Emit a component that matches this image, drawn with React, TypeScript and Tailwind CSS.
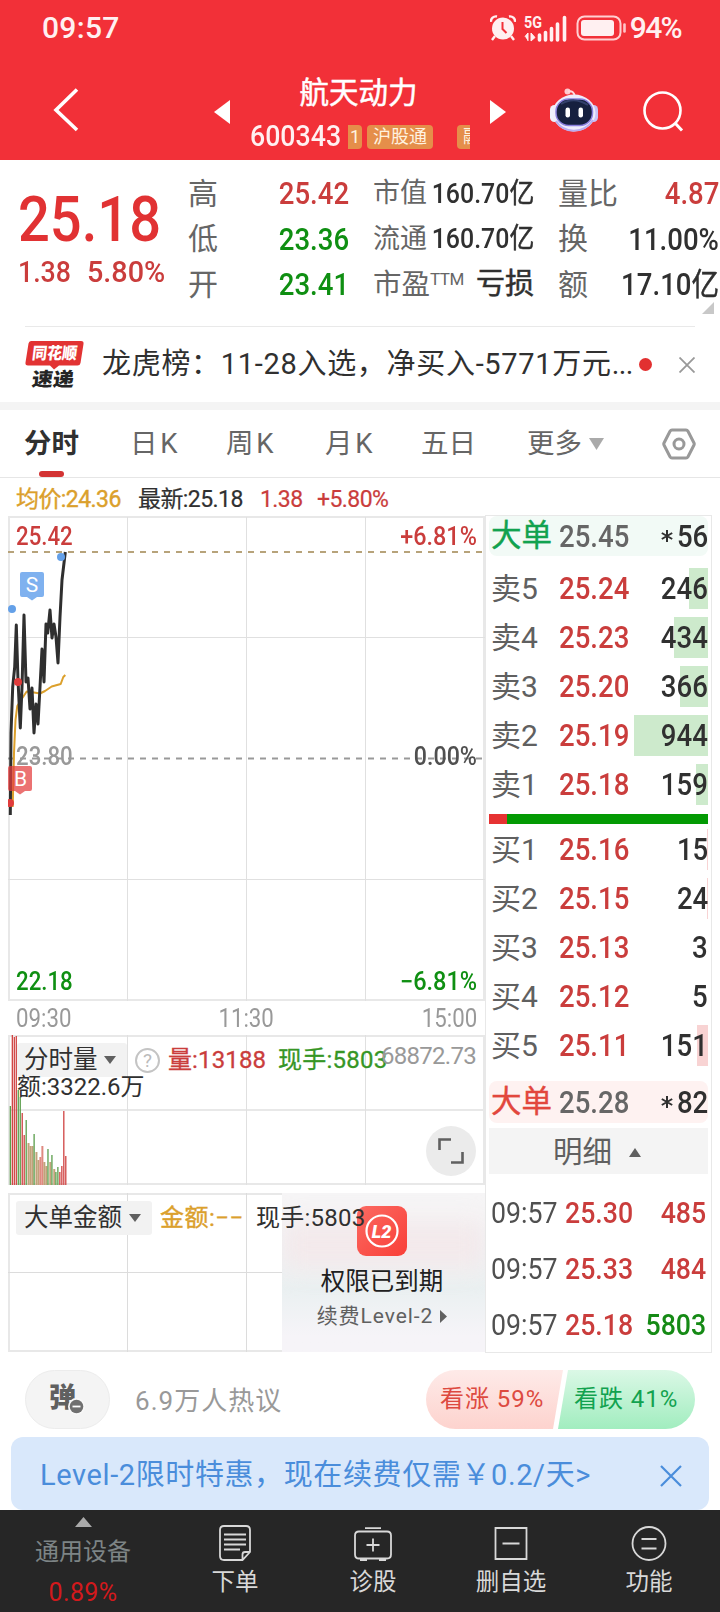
import type { ReactNode } from 'react'

interface Level {
  label: string
  price: string
  volume: string
  bar: number
}

interface Tick {
  time: string
  price: string
  volume: string
  up: boolean
}

const asks: Level[] = [
  { label: '卖5', price: '25.24', volume: '246', bar: 19 },
  { label: '卖4', price: '25.23', volume: '434', bar: 34 },
  { label: '卖3', price: '25.20', volume: '366', bar: 28 },
  { label: '卖2', price: '25.19', volume: '944', bar: 74 },
  { label: '卖1', price: '25.18', volume: '159', bar: 12 },
]

const bids: Level[] = [
  { label: '买1', price: '25.16', volume: '15', bar: 1 },
  { label: '买2', price: '25.15', volume: '24', bar: 1 },
  { label: '买3', price: '25.13', volume: '3', bar: 0 },
  { label: '买4', price: '25.12', volume: '5', bar: 0 },
  { label: '买5', price: '25.11', volume: '151', bar: 11 },
]

const ticks: Tick[] = [
  { time: '09:57', price: '25.30', volume: '485', up: true },
  { time: '09:57', price: '25.33', volume: '484', up: true },
  { time: '09:57', price: '25.18', volume: '5803', up: false },
]

const pricePoints =
  '10.3,815 11,733 12.7,687 14.7,667 16.3,625 18,680 20.3,728 22,687 24,615 26,682 28,678 30,709 32,688 34,733 36,704 38,724 40,687 42,649 44,682 46,624 47.7,633 50,610 52,638 54,624 56,637 58,663 60,617 62,580 65.3,552'

const averagePoints =
  '12.7,807 14,753 15.5,720 17.3,706 21.7,699 26.7,691.5 31,692 40,693.5 45,691 51.7,686.5 60.7,684 63.3,677 65.3,675'

const RED = '#d04443'
const GREEN = '#5a9e4b'
const MIXED = '#c2a27a'

const volumeBars: [number, string][] = [
  [79, GREEN], [150, RED], [148, RED], [149, RED], [95, GREEN], [88, GREEN], [72, RED], [50, RED],
  [65, GREEN], [42, MIXED], [39, MIXED], [39, MIXED], [51, GREEN], [33, MIXED], [25, MIXED],
  [28, '#df8a80'], [39, '#df8a80'], [23, MIXED], [19, MIXED], [36, GREEN], [23, MIXED], [30, GREEN],
  [16, MIXED], [13, GREEN], [18, GREEN], [13, RED], [19, RED], [74, RED], [29, RED],
]

// Condensed figures, anchored on the side they are aligned to
function Num({ children, right }: { children: ReactNode; right?: boolean }) {
  return (
    <span className={right ? 'inline-block origin-right scale-x-[0.89]' : 'inline-block origin-left scale-x-[0.89]'}>
      {children}
    </span>
  )
}

function StatusBar() {
  return (
    <div className="flex h-14 items-center pl-[42px] pr-[39px] text-[30px] font-medium leading-none text-[#fff0f1]">
      <span className="flex-1 tracking-[0.01em]">09:57</span>
      <svg className="mr-[8px] h-[26px] w-[26px]" viewBox="0 0 26 26">
        <circle cx="13" cy="13.500" r="11" fill="#fff0f1" />
        <path d="M1 7a5 5 0 0 1 6-5.500M25 7a5 5 0 0 0-6-5.500M5 21l-3 4M21 21l3 4" fill="none" stroke="#fff0f1" strokeWidth="2.400" />
        <path d="M12.500 7v7l4 4" fill="none" stroke="#f23038" strokeWidth="2" />
      </svg>
      <svg className="mr-[9px] h-[27px] w-[43px] overflow-visible" viewBox="0 0 43 27">
        <text x="0" y="13" fontSize="16" fontWeight="700" textLength="18" lengthAdjust="spacingAndGlyphs" fill="#fff0f1" className="font-[Roboto,sans-serif]">5G</text>
        <path d="M1 21.500l3-3.500V26M7 18v8l4-3.500z" fill="#fff0f1" stroke="#fff0f1" strokeWidth="1" />
        <path d="M15.500 20v5M21.500 17.500v7.500M27.500 13.500v11.500M33.500 9v16M40.500 2.500v22.500" stroke="#fff0f1" strokeWidth="3.600" strokeLinecap="round" fill="none" />
      </svg>
      <svg className="mr-[3px] h-[26px] w-[51px]" viewBox="0 0 51 26">
        <rect x="1.500" y="1.500" width="43" height="23" rx="7" fill="none" stroke="#ffd0d2" strokeWidth="2" />
        <rect x="5" y="5" width="33" height="16" rx="3" fill="#fff0f1" />
        <path d="M48.500 9.500v7" stroke="#ffc5c8" strokeWidth="2.600" strokeLinecap="round" />
      </svg>
      <span className="tracking-[-0.055em]">94%</span>
    </div>
  )
}

function RobotIcon() {
  return (
    <svg className="h-[46px] w-[50px]" viewBox="0 0 50 46">
      <circle cx="18.500" cy="4.500" r="3" fill="#ffc9cf" />
      <path d="M19 4.500c4-1 6 .5 7 5" fill="none" stroke="#ffd9dd" strokeWidth="2" />
      <rect x="1" y="18" width="9" height="17" rx="4.500" fill="#eef0fc" />
      <rect x="40" y="18" width="9" height="17" rx="4.500" fill="#c9c3f6" />
      <ellipse cx="25" cy="26" rx="21.500" ry="18.500" fill="#eeecfb" />
      <path d="M7 34c8 13 28 13 37-1" fill="none" stroke="#b9adf0" strokeWidth="2" />
      <rect x="7" y="12" width="36.500" height="26.500" rx="12.500" fill="#16203f" stroke="#8a80dd" strokeWidth="1.500" />
      <path d="M12 17c8-5 18-5 27 1" fill="none" stroke="#33406b" strokeWidth="2" />
      <rect x="16.500" y="20.500" width="4.500" height="10" rx="2.200" fill="#fff" />
      <rect x="29.500" y="20.500" width="4.500" height="10" rx="2.200" fill="#fff" />
    </svg>
  )
}

function TitleBar() {
  return (
    <div className="flex h-[104px] items-center">
      <svg className="ml-[53px] mt-[3px] h-11 w-[27px]" viewBox="0 0 27 44">
        <path d="M24 1.500L3 22l21 20" fill="none" stroke="#fff" strokeWidth="3.600" />
      </svg>
      <svg className="ml-[134px] mt-2 h-6 w-4" viewBox="0 0 16 24">
        <path d="M16 0v24L0 12z" fill="#fff" />
      </svg>
      <div className="ml-[20px] flex w-[220px] flex-col pt-[14px]">
        <h1 className="pr-[3px] text-center text-[29.500px] leading-[42px] text-white [-webkit-text-stroke:0.5px]">航天动力</h1>
        <div className="flex h-11 items-center">
          <span className="w-[98px] text-[30px] font-medium leading-none text-[#fff0f1]">
            <Num>600343</Num>
          </span>
          <div className="mt-[2px] flex h-6 flex-1 gap-[5px] overflow-hidden text-[18px] leading-6 text-[#fff3e0]">
            <span className="w-[14px] shrink-0 rounded-r-sm bg-[#e58e4a] text-center">1</span>
            <span className="w-[66px] shrink-0 rounded-sm bg-[#e58e4a] text-center">沪股通</span>
            <span className="ml-[19px] w-[66px] shrink-0 rounded-sm bg-[#e58e4a] pl-[6px]">融</span>
          </div>
        </div>
      </div>
      <svg className="ml-5 mt-2 h-6 w-4" viewBox="0 0 16 24">
        <path d="M0 0v24l16-12z" fill="#fff" />
      </svg>
      <div className="ml-[43px] mt-1">
        <RobotIcon />
      </div>
      <svg className="ml-[44px] mt-[8px] h-[42px] w-[42px]" viewBox="0 0 42 42">
        <circle cx="19.500" cy="19.500" r="18" fill="none" stroke="#fff" strokeWidth="2.600" />
        <path d="M32 32l7 7.500" stroke="#fff" strokeWidth="3" />
      </svg>
    </div>
  )
}

function QuoteRow({ label, value, small }: { label: ReactNode; value: ReactNode; small?: boolean }) {
  return (
    <div className="flex h-[45.500px] items-center justify-between whitespace-nowrap">
      <span className={small ? 'text-[27px] font-normal text-[#666]' : 'text-[30px] font-normal text-[#666]'}>{label}</span>
      <span className={small ? '-ml-5 text-[28px] text-[#303030]' : 'text-[31px] text-[#303030]'}>{value}</span>
    </div>
  )
}

function Quote() {
  return (
    <div className="relative flex h-[166px] pt-[11px] font-medium leading-none">
      <div className="w-[188px] pl-[18px] text-[#e13233]">
        <div className="mt-[17px] text-[63px] leading-[64px]">
          <Num>25.18</Num>
        </div>
        <div className="mt-[3px] flex text-[30px] leading-[34px] text-[#ca3d3c]">
          <span className="w-[69px]">
            <Num>1.38</Num>
          </span>
          <span className="inline-block origin-left scale-x-[0.96]">5.80%</span>
        </div>
      </div>
      <div className="w-[161px]">
        <QuoteRow label="高" value={<span className="text-[#ca3d3c]"><Num right>25.42</Num></span>} />
        <QuoteRow label="低" value={<span className="text-[#0f8f12]"><Num right>23.36</Num></span>} />
        <QuoteRow label="开" value={<span className="text-[#0f8f12]"><Num right>23.41</Num></span>} />
      </div>
      <div className="ml-[24px] w-[161px]">
        <QuoteRow small label="市值" value={<Num right>160.70<span className="font-normal [-webkit-text-stroke:0.5px]">亿</span></Num>} />
        <QuoteRow small label="流通" value={<Num right>160.70<span className="font-normal [-webkit-text-stroke:0.5px]">亿</span></Num>} />
        <QuoteRow
          small
          label={
            <span className="text-[28.500px]">
              市盈<sup className="top-[-9px] text-[17px] leading-none tracking-[-0.03em]">TTM</sup>
            </span>
          }
          value={<span className="text-[29px] font-normal [-webkit-text-stroke:0.5px]">亏损</span>}
        />
      </div>
      <div className="ml-[24px] w-[161px]">
        <QuoteRow label="量比" value={<span className="text-[#ca3d3c]"><Num right>4.87</Num></span>} />
        <QuoteRow label="换" value={<Num right>11.00%</Num>} />
        <QuoteRow label="额" value={<Num right>17.10<span className="font-normal [-webkit-text-stroke:0.5px]">亿</span></Num>} />
      </div>
      <svg className="absolute bottom-3 right-[6px] h-3 w-3" viewBox="0 0 12 12">
        <path d="M12 0v12H0z" fill="#c8c8c8" />
      </svg>
    </div>
  )
}

function NewsRow() {
  return (
    <div className="mx-[25px] flex h-[76px] items-center border-t border-[#e9e9e9]">
      <svg className="h-[50px] w-[59px] shrink-0 overflow-visible" viewBox="0 0 59 50">
        <path d="M6 1h50q3 0 2.500 3l-3 19q-.5 2.500-3 2.500H34l-5 4-4-4H3q-3 0-2.500-3L3.500 3.500Q4 1 6 1z" fill="#e23333" />
        <text x="9" y="19.500" fontSize="16.500" fontWeight="900" textLength="45" lengthAdjust="spacingAndGlyphs" fill="#fff" transform="skewX(-7)" className="font-['Noto_Sans_CJK_SC',sans-serif]">同花顺</text>
        <text x="12" y="46.500" fontSize="19" fontWeight="900" textLength="42" lengthAdjust="spacingAndGlyphs" fill="#252525" transform="skewX(-7)" className="font-['Noto_Sans_CJK_SC',sans-serif]">速递</text>
      </svg>
      <span className="ml-[18px] w-[532px] whitespace-nowrap text-[29px] leading-none tracking-[0.024em] text-[#303030]">
        龙虎榜：11-28入选，净买入-5771万元<span className="tracking-[-0.02em]">...</span>
      </span>
      <span className="ml-[5px] h-[13px] w-[13px] shrink-0 rounded-full bg-[#e23030]" />
      <svg className="ml-auto h-4 w-4" viewBox="0 0 16 16">
        <path d="M.5.5l15 15M15.500.5l-15 15" stroke="#999" strokeWidth="1.800" />
      </svg>
    </div>
  )
}

function Tabs() {
  return (
    <nav className="flex h-[68px] items-center border-b border-[#e6e6e6] pl-[24px] pr-6 text-[27.500px] leading-none text-[#666] [word-spacing:-4px]">
      <span className="flex h-full w-[106px] flex-col justify-between">
        <span className="pt-[20px] font-bold text-[#303030]">分时</span>
        <span className="ml-[15px] h-[6px] w-[25px] rounded-full bg-[#d33333]" />
      </span>
      <span className="w-[96px]">日 K</span>
      <span className="w-[99px]">周 K</span>
      <span className="w-[96px]">月 K</span>
      <span className="w-[106px]">五日</span>
      <span>更多</span>
      <svg className="ml-[7px] h-3 w-[15px]" viewBox="0 0 15 12">
        <path d="M0 0h15L7.500 12z" fill="#aaa" />
      </svg>
      <svg className="ml-auto h-[34px] w-[34px]" viewBox="0 0 34 34">
        <path d="M10 3h14q1.300 0 2 1.200L32 16q.5 1 0 2l-6 11.800q-.7 1.200-2 1.200H10q-1.300 0-2-1.200L2 18q-.5-1 0-2L8 4.200Q8.700 3 10 3z" fill="none" stroke="#999" strokeWidth="3" />
        <circle cx="17" cy="17" r="5" fill="none" stroke="#999" strokeWidth="3" />
      </svg>
    </nav>
  )
}

function PriceChart() {
  return (
    <div className="relative h-[485px]">
      <svg className="absolute inset-0 h-full w-full" viewBox="8 516 477 485">
        <path d="M8 517h477M8 1000h477" stroke="#e8e8e8" strokeWidth="2" />
        <path d="M9 516v485M484 516v485" stroke="#e8e8e8" strokeWidth="2" />
        <path d="M8 637.500h477M8 879.500h477M127.500 517v484M246.500 517v484M365.500 517v484" stroke="#e0e0e0" />
        <path d="M8 552h476" stroke="#b7a37a" strokeWidth="2" strokeDasharray="6 6" />
        <path d="M8 758.500h476" stroke="#999" strokeWidth="1.800" strokeDasharray="6 6" />
        <polyline points={averagePoints} fill="none" stroke="#dca02c" strokeWidth="2" strokeLinejoin="round" />
        <polyline points={pricePoints} fill="none" stroke="#2f2f2f" strokeWidth="3" strokeLinejoin="round" />
        <circle cx="61" cy="557" r="4" fill="#64a0e8" />
        <circle cx="12" cy="609" r="4" fill="#64a0e8" />
        <circle cx="18" cy="682" r="4" fill="#e03c3c" />
        <circle cx="10" cy="803" r="4" fill="#e03c3c" />
        <path d="M22 572h20q2 0 2 2v21q0 2-2 2h-5l-5 3.500-5-3.500h-5q-2 0-2-2v-21q0-2 2-2z" fill="#7fb1ef" />
        <text x="32" y="592" fontSize="21" textAnchor="middle" fill="#fff">S</text>
        <path d="M10 766h20q2 0 2 2v21q0 2-2 2h-5l-5 3.500-5-3.500h-5q-2 0-2-2v-21q0-2 2-2z" fill="#e33c3c" opacity=".72" />
        <text x="20.500" y="786" fontSize="21" textAnchor="middle" fill="#fff">B</text>
      </svg>
      <div className="relative flex h-full flex-col justify-between px-[8px] pb-[7px] pt-[9px] text-[25px] font-medium leading-6">
        <div className="flex justify-between text-[#ca3d3c]">
          <Num>25.42</Num>
          <span className="inline-block origin-right scale-x-[0.935]">+6.81%</span>
        </div>
        <div className="mt-[-6px] flex justify-between text-[#999]">
          <Num>23.80</Num>
          <span className="inline-block origin-right scale-x-[0.93] text-[#505050]">0.00%</span>
        </div>
        <div className="flex justify-between text-[#0f8f12]">
          <Num>22.18</Num>
          <span className="inline-block origin-right scale-x-[0.94]">−6.81%</span>
        </div>
      </div>
    </div>
  )
}

function Caret() {
  return (
    <svg className="h-2 w-3" viewBox="0 0 12 8">
      <path d="M0 0h12L6 8z" fill="#606060" />
    </svg>
  )
}

function VolumeChart() {
  return (
    <div className="relative h-[150px]">
      <svg className="absolute inset-0 h-full w-full" viewBox="8 1035 477 150">
        <path d="M8 1036h477M8 1110h477M8 1184h477M9 1035v150M484 1035v150" stroke="#e8e8e8" strokeWidth="2" />
        <path d="M127.500 1035v150M246.500 1035v150M365.500 1035v150" stroke="#e0e0e0" />
        <rect x="17" y="1043" width="110" height="34" rx="3" fill="#f2f2f2" />
        {volumeBars.map(([height, color], i) => (
          <rect
            key={i}
            x={9.700 + i * 1.980}
            y={1185 - height}
            width={color === RED || color === GREEN ? 1.300 : 2}
            height={height}
            fill={color}
          />
        ))}
      </svg>
      <div className="relative pl-[9px] pt-[8px] text-[24px] leading-none">
        <div className="flex h-[34px] items-center whitespace-nowrap">
          <span className="flex w-[110px] items-center gap-[6px] pl-[7px] text-[24.500px] text-[#303030]">
            分时量
            <Caret />
          </span>
          <span className="ml-2 flex h-[25px] w-[25px] items-center justify-center rounded-full border-2 border-[#c4c4c4] text-[19px] text-[#bbb]">?</span>
          <span className="ml-[8px] w-[110px] tracking-[0.005em] text-[#ca3d3c] [-webkit-text-stroke:0.3px]">量:13188</span>
          <span className="tracking-[0.01em] text-[#369625] [-webkit-text-stroke:0.3px]">现手:5803</span>
          <span className="absolute right-[9px] top-[9px] text-[24px] leading-6 tracking-[-0.03em] text-[#999]">68872.73</span>
        </div>
        <div className="-mt-[2px] text-[24px] leading-[24px] text-[#303030]">额:3322.6万</div>
      </div>
      <div className="absolute bottom-[9px] right-[9px] flex h-[50px] w-[50px] items-center justify-center rounded-full bg-[#ebebeb]">
        <svg className="h-[26px] w-[26px]" viewBox="0 0 26 26">
          <path d="M1.500 12V1.500H13M24.500 14v10.500H13" fill="none" stroke="#606060" strokeWidth="2.600" />
        </svg>
      </div>
    </div>
  )
}

function BigOrderChart() {
  return (
    <div className="relative mt-2 flex h-[159px] justify-end">
      <svg className="absolute inset-0 h-full w-full" viewBox="8 1193 477 159">
        <path d="M8 1194h477M8 1351h477M9 1193v159" stroke="#e8e8e8" strokeWidth="2" />
        <path d="M8 1272.500h477M127.500 1193v159M246.500 1193v159" stroke="#dcdcdc" />
        <rect x="16" y="1201" width="136" height="34" rx="3" fill="#f2f2f2" />
      </svg>
      <div className="relative flex w-[203px] flex-col items-center overflow-hidden bg-linear-to-b from-[#f6f5f6] from-15% via-[#eaf0f1] via-60% to-[#f6f4f8] to-90% pr-[3px] pt-[13px]">
        <div className="absolute inset-x-0 top-7 h-12 bg-[#f3e9eb] blur-md" />
        <svg className="relative h-[50px] w-[50px]" viewBox="0 0 50 50">
          <defs>
            <linearGradient id="l2" x1="0" y1="0" x2="1" y2="1">
              <stop offset="0" stopColor="#fb6a62" />
              <stop offset="1" stopColor="#f93f38" />
            </linearGradient>
          </defs>
          <rect width="50" height="50" rx="9" fill="url(#l2)" />
          <circle cx="25" cy="25" r="15.500" fill="none" stroke="#fff" strokeWidth="2.200" />
          <text x="24.500" y="31.500" fontSize="18" fontWeight="900" fontStyle="italic" textAnchor="middle" fill="#fff">L2</text>
        </svg>
        <span className="relative mt-[12px] text-[24.500px] leading-7 text-[#202020]">权限已到期</span>
        <span className="relative mt-[6px] flex items-center gap-[7px] text-[21px] leading-7 tracking-[0.045em] text-[#606060]">
          续费Level-2
          <svg className="h-[13px] w-[7px]" viewBox="0 0 7 13">
            <path d="M0 0l7 6.500L0 13z" fill="#606060" />
          </svg>
        </span>
      </div>
      <div className="absolute left-[8px] top-[8px] flex h-[34px] items-center whitespace-nowrap text-[24px] leading-none text-[#303030]">
        <span className="flex w-[136px] items-center gap-[7px] pl-[8px] text-[24.500px]">
          大单金额
          <Caret />
        </span>
        <span className="ml-[8px] w-[96px] tracking-[0.02em] text-[#dba02c] [-webkit-text-stroke:0.4px]">金额:−−</span>
        <span className="tracking-[0.01em]">现手:5803</span>
      </div>
    </div>
  )
}

function Charts() {
  return (
    <div className="w-[477px]">
      <PriceChart />
      <div className="flex h-[34px] items-center justify-between px-[8px] text-[25px] leading-none text-[#999]">
        <Num>09:30</Num>
        <span className="inline-block scale-x-[0.89]">11:30</span>
        <Num right>15:00</Num>
      </div>
      <VolumeChart />
      <BigOrderChart />
    </div>
  )
}

function LevelRow({ level, side }: { level: Level; side: 'ask' | 'bid' }) {
  return (
    <div className="relative flex h-[49px] items-center pl-[2px] font-medium">
      <span
        className={side === 'ask' ? 'absolute right-0 top-1 h-[41px] bg-[#cdeacc]' : 'absolute right-0 top-1 h-[41px] bg-[#f8d3d3]'}
        style={{ width: level.bar }}
      />
      <span className="w-[68px] text-[30px] font-normal text-[#606060]">{level.label}</span>
      <span className="text-[31px] text-[#ca3d3c]">
        <Num>{level.price}</Num>
      </span>
      <span className="relative ml-auto text-[31px] text-[#303030]">
        <Num right>{level.volume}</Num>
      </span>
    </div>
  )
}

function BigOrder({ price, volume, sell }: { price: string; volume: string; sell?: boolean }) {
  return (
    <div className={sell ? 'flex h-10 items-center rounded-lg bg-[#f2faf6] pl-[2px] font-medium' : 'flex h-[42px] items-center rounded-lg bg-[#fef2f1] pl-[2px] font-medium'}>
      <span className={sell ? 'w-[68px] text-[30.500px] font-normal text-[#12a24f] [-webkit-text-stroke:0.4px]' : 'w-[68px] text-[30.500px] font-normal text-[#e2473d] [-webkit-text-stroke:0.4px]'}>大单</span>
      <span className="text-[31px] text-[#666]">
        <Num>{price}</Num>
      </span>
      <span className="ml-auto flex items-center text-[31px] text-[#303030]">
        <svg className="h-3 w-3" viewBox="0 0 12 12">
          <path d="M6 0v12M.8 3l10.400 6M.8 9l10.400-6" stroke="#303030" strokeWidth="2" />
        </svg>
        <Num right>{volume}</Num>
      </span>
    </div>
  )
}

function OrderBook() {
  return (
    <div className="-mt-px h-[838px] w-[227px] border border-[#e8e8e8] bg-white px-[3px] leading-none">
      <BigOrder price="25.45" volume="56" sell />
      <div className="pt-[8px]">
        {asks.map((level) => (
          <LevelRow key={level.label} level={level} side="ask" />
        ))}
      </div>
      <div className="mt-[5px] flex h-[10px] bg-[#039a03]">
        <span className="w-[18px] bg-[#e63232]" />
      </div>
      <div className="pt-px">
        {bids.map((level) => (
          <LevelRow key={level.label} level={level} side="bid" />
        ))}
      </div>
      <div className="mt-[11px]">
        <BigOrder price="25.28" volume="82" />
      </div>
      <div className="mt-[5px] flex h-[46px] items-center justify-center gap-[17px] bg-[#f4f4f4] pr-[3px] pt-[3px] text-[29.500px] text-[#606060]">
        明细
        <svg className="h-[9px] w-3" viewBox="0 0 12 9">
          <path d="M6 0l6 9H0z" fill="#606060" />
        </svg>
      </div>
      <div className="pt-[11px]">
        {ticks.map((tick, i) => (
          <div key={i} className="flex h-14 items-center pl-[2px] pr-[2px] text-[30px] font-medium text-[#505050]">
            <span className="w-[74px] font-normal">
              <Num>{tick.time}</Num>
            </span>
            <span className="w-[66px] text-[#ca3d3c]">
              <Num>{tick.price}</Num>
            </span>
            <span className={tick.up ? 'ml-auto text-[#ca3d3c]' : 'ml-auto text-[#158a15]'}>
              <Num right>{tick.volume}</Num>
            </span>
          </div>
        ))}
      </div>
    </div>
  )
}

function Discussion() {
  return (
    <div className="flex h-[84px] items-center px-[25px] pt-[10px]">
      <div className="mt-[-2px] flex h-[59px] w-[85px] items-center justify-center rounded-full border border-[#ececec] bg-[#f4f4f4]">
        <svg className="h-9 w-9 overflow-visible" viewBox="0 0 36 36">
          <text x="-1" y="26" fontSize="27" fontWeight="900" fill="#606060">弹</text>
          <circle cx="26.500" cy="25.500" r="8.500" fill="#f8f8f8" />
          <circle cx="26.500" cy="25.500" r="6.800" fill="#707070" />
          <path d="M22.500 25.500h8" stroke="#fff" strokeWidth="1.800" />
        </svg>
      </div>
      <span className="ml-[25px] mt-[2px] text-[26px] leading-none tracking-[0.04em] text-[#999]">6.9万人热议</span>
      <div className="relative ml-auto mt-[-2px] flex h-[59px] w-[269px] text-[24px] leading-[58px] tracking-[0.04em]">
        <svg className="absolute inset-0 h-full w-full" viewBox="0 0 269 59">
          <defs>
            <linearGradient id="up" x1="0" y1="0" x2="0" y2="1">
              <stop offset="0" stopColor="#feeae8" />
              <stop offset="1" stopColor="#fdd3ce" />
            </linearGradient>
            <linearGradient id="down" x1="0" y1="0" x2="0" y2="1">
              <stop offset="0" stopColor="#dbf8e6" />
              <stop offset="1" stopColor="#a1edbf" />
            </linearGradient>
          </defs>
          <path d="M29.500 0H137l-10 59H29.500a29.500 29.500 0 0 1 0-59z" fill="url(#up)" />
          <path d="M142 0h97.500a29.500 29.500 0 0 1 0 59H132z" fill="url(#down)" />
        </svg>
        <span className="relative w-[134px] pl-[14px] text-[#dd4a40]">看涨 59%</span>
        <span className="relative pl-[14px] text-[#12a24f]">看跌 41%</span>
      </div>
    </div>
  )
}

function Banner() {
  return (
    <div className="mx-[11px] flex h-[73px] items-center rounded-xl bg-[#d9e8fb] pl-[29px] pr-[27px] pt-1 text-[29px] leading-none tracking-[0.021em] text-[#4a8ddb]">
      <span className="flex-1 whitespace-nowrap">Level-2限时特惠，现在续费仅需￥0.2/天&gt;</span>
      <svg className="h-[22px] w-[22px]" viewBox="0 0 22 22">
        <path d="M1 1l20 20M21 1L1 21" stroke="#4a8ddb" strokeWidth="2.200" />
      </svg>
    </div>
  )
}

function NavItem({ label, children }: { label: string; children: ReactNode }) {
  return (
    <div className="flex w-[138px] flex-col items-center pt-[14px] text-[23.500px] leading-none text-[#d8d8d8]">
      <svg className="h-[38px] w-[38px]" viewBox="0 0 38 38" fill="none" stroke="#d8d8d8" strokeWidth="1.800">
        {children}
      </svg>
      <span className="mt-[9px]">{label}</span>
    </div>
  )
}

function BottomNav() {
  return (
    <div className="flex h-[102px] bg-[#262626]">
      <div className="flex w-[166px] flex-col items-center pt-[7px] leading-none">
        <svg className="h-[10px] w-[17px]" viewBox="0 0 17 10">
          <path d="M8.500 0L17 10H0z" fill="#aaa" />
        </svg>
        <span className="mt-[13px] text-[24px] text-[#7d8485]">通用设备</span>
        <span className="mt-[16px] text-[25px] tracking-[0.015em] text-[#d3191c]">0.89%</span>
      </div>
      <NavItem label="下单">
        <path d="M8 2h22q4 0 4 4v22l-7.500 8H8q-4 0-4-4V6q0-4 4-4zM34 28h-5q-2.500 0-2.500 2.500V36M8 10.500h22M8 15.500h22M8 20.500h22M8 25.500h16" />
      </NavItem>
      <NavItem label="诊股">
        <path d="M5 7.500h28q4 0 4 4v19q0 4-4 4H5q-4 0-4-4v-19q0-4 4-4zM11 4.200h16M6 36h7M25 36h7M12.500 21h13M19 14.500v13" />
      </NavItem>
      <NavItem label="删自选">
        <path d="M3.500 4h31v31h-31zM10.500 19.500h17" />
      </NavItem>
      <NavItem label="功能">
        <circle cx="19" cy="19.500" r="16.500" />
        <path d="M11.500 15h15M11.500 24.500h15" />
      </NavItem>
    </div>
  )
}

export default function App() {
  return (
    <div className="h-[1612px] w-[720px] overflow-hidden bg-white font-[Roboto,'Noto_Sans_CJK_SC',sans-serif]">
      <header className="h-[160px] bg-[#f23038]">
        <StatusBar />
        <TitleBar />
      </header>
      <Quote />
      <NewsRow />
      <div className="h-2 bg-[#f4f4f4]" />
      <Tabs />
      <div className="flex h-[38px] items-center pb-px pl-[16px] pt-[5px] text-[23px] leading-none tracking-[-0.025em] text-[#303030]">
        <span className="w-[122px] text-[#dba02c] [-webkit-text-stroke:0.4px]">均价:24.36</span>
        <span className="w-[122px] [-webkit-text-stroke:0.2px]">最新:25.18</span>
        <span className="w-[57px] text-[#ca3d3c] [-webkit-text-stroke:0.2px]">1.38</span>
        <span className="text-[#ca3d3c] [-webkit-text-stroke:0.2px]">+5.80%</span>
      </div>
      <div className="flex h-[837px] pl-2">
        <Charts />
        <OrderBook />
      </div>
      <Discussion />
      <Banner />
      <BottomNav />
    </div>
  )
}
